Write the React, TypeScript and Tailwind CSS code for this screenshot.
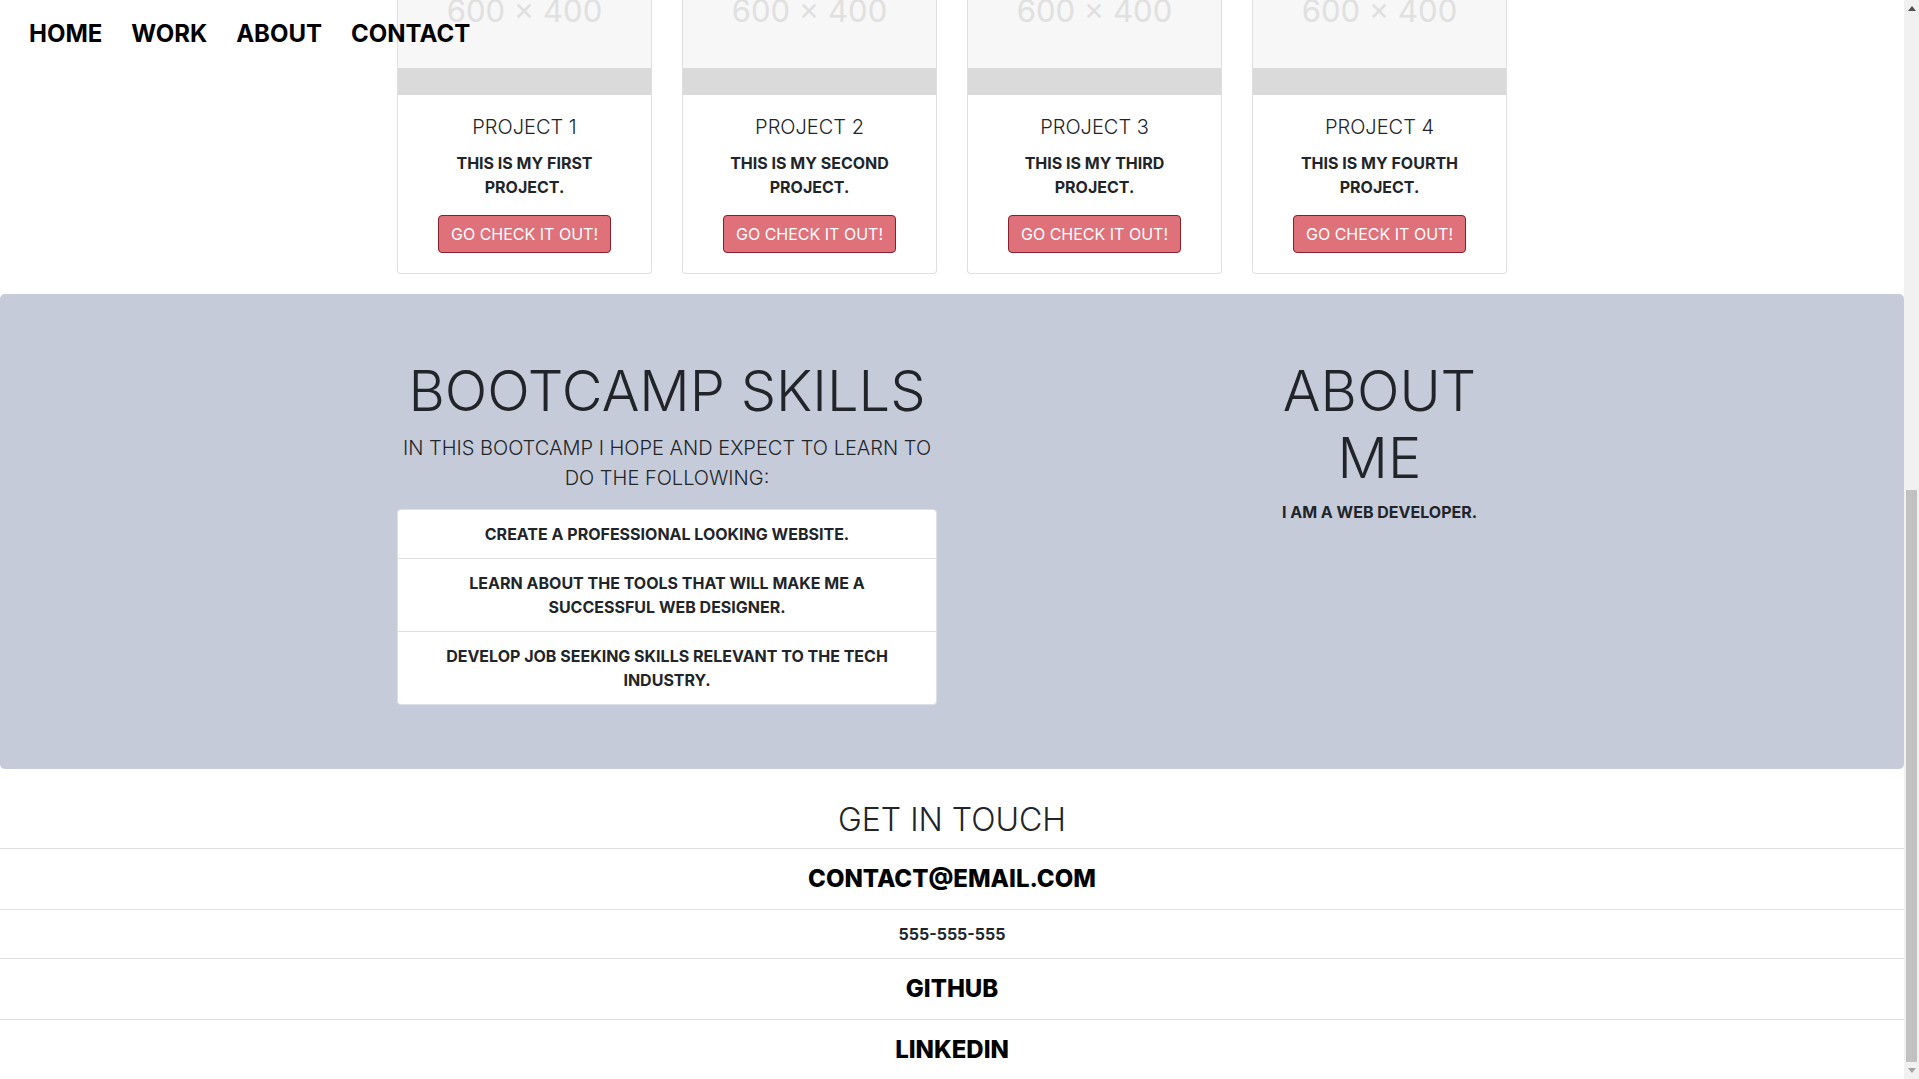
import { ReactNode } from 'react';

const projects = [
  { title: 'PROJECT 1', text: 'THIS IS MY FIRST PROJECT.' },
  { title: 'PROJECT 2', text: 'THIS IS MY SECOND PROJECT.' },
  { title: 'PROJECT 3', text: 'THIS IS MY THIRD PROJECT.' },
  { title: 'PROJECT 4', text: 'THIS IS MY FOURTH PROJECT.' },
];

const skills = [
  'CREATE A PROFESSIONAL LOOKING WEBSITE.',
  'LEARN ABOUT THE TOOLS THAT WILL MAKE ME A SUCCESSFUL WEB DESIGNER.',
  'DEVELOP JOB SEEKING SKILLS RELEVANT TO THE TECH INDUSTRY.',
];

const ProjectCard = ({ title, text }: { title: string; text: string }) => {
  return (
    <div className="flex flex-col rounded-b-[4px] border border-t-0 border-[#dfdfdf] bg-white">
      {/* bottom of the 600x400 placeholder, the rest is scrolled away */}
      <div className="h-[68px] overflow-hidden bg-[#f7f7f7] text-center">
        <div className="-mt-[7px] text-[31px] leading-[36px] text-[#e0e0e0]">600 × 400</div>
      </div>
      <div className="h-[27px] bg-[#dadada]" />
      <div className="flex flex-col items-center px-5 py-5 text-center text-[#212529]">
        <h5 className="mb-3 text-[20px] font-light leading-[24px]">{title}</h5>
        <p className="mb-4 text-[16px] font-bold leading-6">{text}</p>
        <button className="rounded-[4px] border border-[#86202d] bg-[#de717a] px-3 py-[6px] text-[16px] leading-6 text-white">
          GO CHECK IT OUT!
        </button>
      </div>
    </div>
  );
};

const ContactItem = ({ children }: { children: ReactNode }) => (
  <li className="border-t border-[#dfdfdf] px-5 py-3 text-center">{children}</li>
);

const Scrollbar = () => (
  <div className="flex h-full w-[15px] flex-col bg-[#f1f1f1]">
    <div className="flex h-[17px] items-center justify-center">
      <svg width="8" height="5" viewBox="0 0 8 5">
        <polygon points="0,5 8,5 4,0" fill="#505050" />
      </svg>
    </div>
    <div className="flex-1" />
    <div className="mx-[2px] h-[572px] bg-[#c1c1c1]" />
    <div className="flex h-[17px] items-center justify-center">
      <svg width="8" height="5" viewBox="0 0 8 5">
        <polygon points="0,0 8,0 4,5" fill="#a3a3a3" />
      </svg>
    </div>
  </div>
);

export default function App() {
  return (
    <div className="flex h-[1079px] w-full overflow-hidden bg-white font-['Inter',sans-serif]">
      <main className="relative flex-1 overflow-hidden">
        <nav className="absolute left-0 top-0 z-10 flex gap-[29px] pl-[29px] pt-[16px] text-[24px] font-bold leading-[36px] text-black">
          <a href="#">HOME</a>
          <a href="#">WORK</a>
          <a href="#">ABOUT</a>
          <a href="#">CONTACT</a>
        </nav>

        <section className="mx-auto mb-[20px] w-[1140px] px-[15px]">
          <div className="grid grid-cols-4 gap-[30px]">
            {projects.map((p) => (
              <ProjectCard key={p.title} title={p.title} text={p.text} />
            ))}
          </div>
        </section>

        <section className="rounded-[5px] bg-[#c6cbd9] py-16 text-[#212529]">
          <div className="mx-auto grid w-[1140px] grid-cols-4 gap-[30px] px-[15px]">
            <div className="col-span-2 flex flex-col text-center">
              <h1 className="mb-2 text-[56px] font-light leading-[1.2]">BOOTCAMP SKILLS</h1>
              <p className="mb-4 text-[20px] font-light leading-[30px]">
                IN THIS BOOTCAMP I HOPE AND EXPECT TO LEARN TO DO THE FOLLOWING:
              </p>
              <ul className="rounded-[4px] border border-[#dcdfe5] bg-white">
                {skills.map((s, i) => (
                  <li
                    key={s}
                    className={`px-5 py-3 text-[16px] font-bold leading-6 ${i > 0 ? 'border-t border-[#dfdfdf]' : ''}`}>
                    {s}
                  </li>
                ))}
              </ul>
            </div>
            <div className="col-start-4 flex flex-col text-center">
              <h1 className="mb-2 text-[56px] font-light leading-[1.2]">ABOUT ME</h1>
              <p className="text-[16px] font-bold leading-6">I AM A WEB DEVELOPER.</p>
            </div>
          </div>
        </section>

        <section className="mt-8">
          <h2 className="mb-2 text-center text-[32px] font-light leading-[1.2] text-[#212529]">GET IN TOUCH</h2>
          <ul>
            <ContactItem>
              <h4 className="text-[24px] font-extrabold leading-9 text-black">CONTACT@EMAIL.COM</h4>
            </ContactItem>
            <ContactItem>
              <p className="text-[16px] font-bold leading-6 text-[#212529]">555-555-555</p>
            </ContactItem>
            <ContactItem>
              <h4 className="text-[24px] font-extrabold leading-9 text-black">GITHUB</h4>
            </ContactItem>
            <ContactItem>
              <h4 className="text-[24px] font-extrabold leading-9 text-black">LINKEDIN</h4>
            </ContactItem>
          </ul>
        </section>
      </main>
      <Scrollbar />
    </div>
  );
}
